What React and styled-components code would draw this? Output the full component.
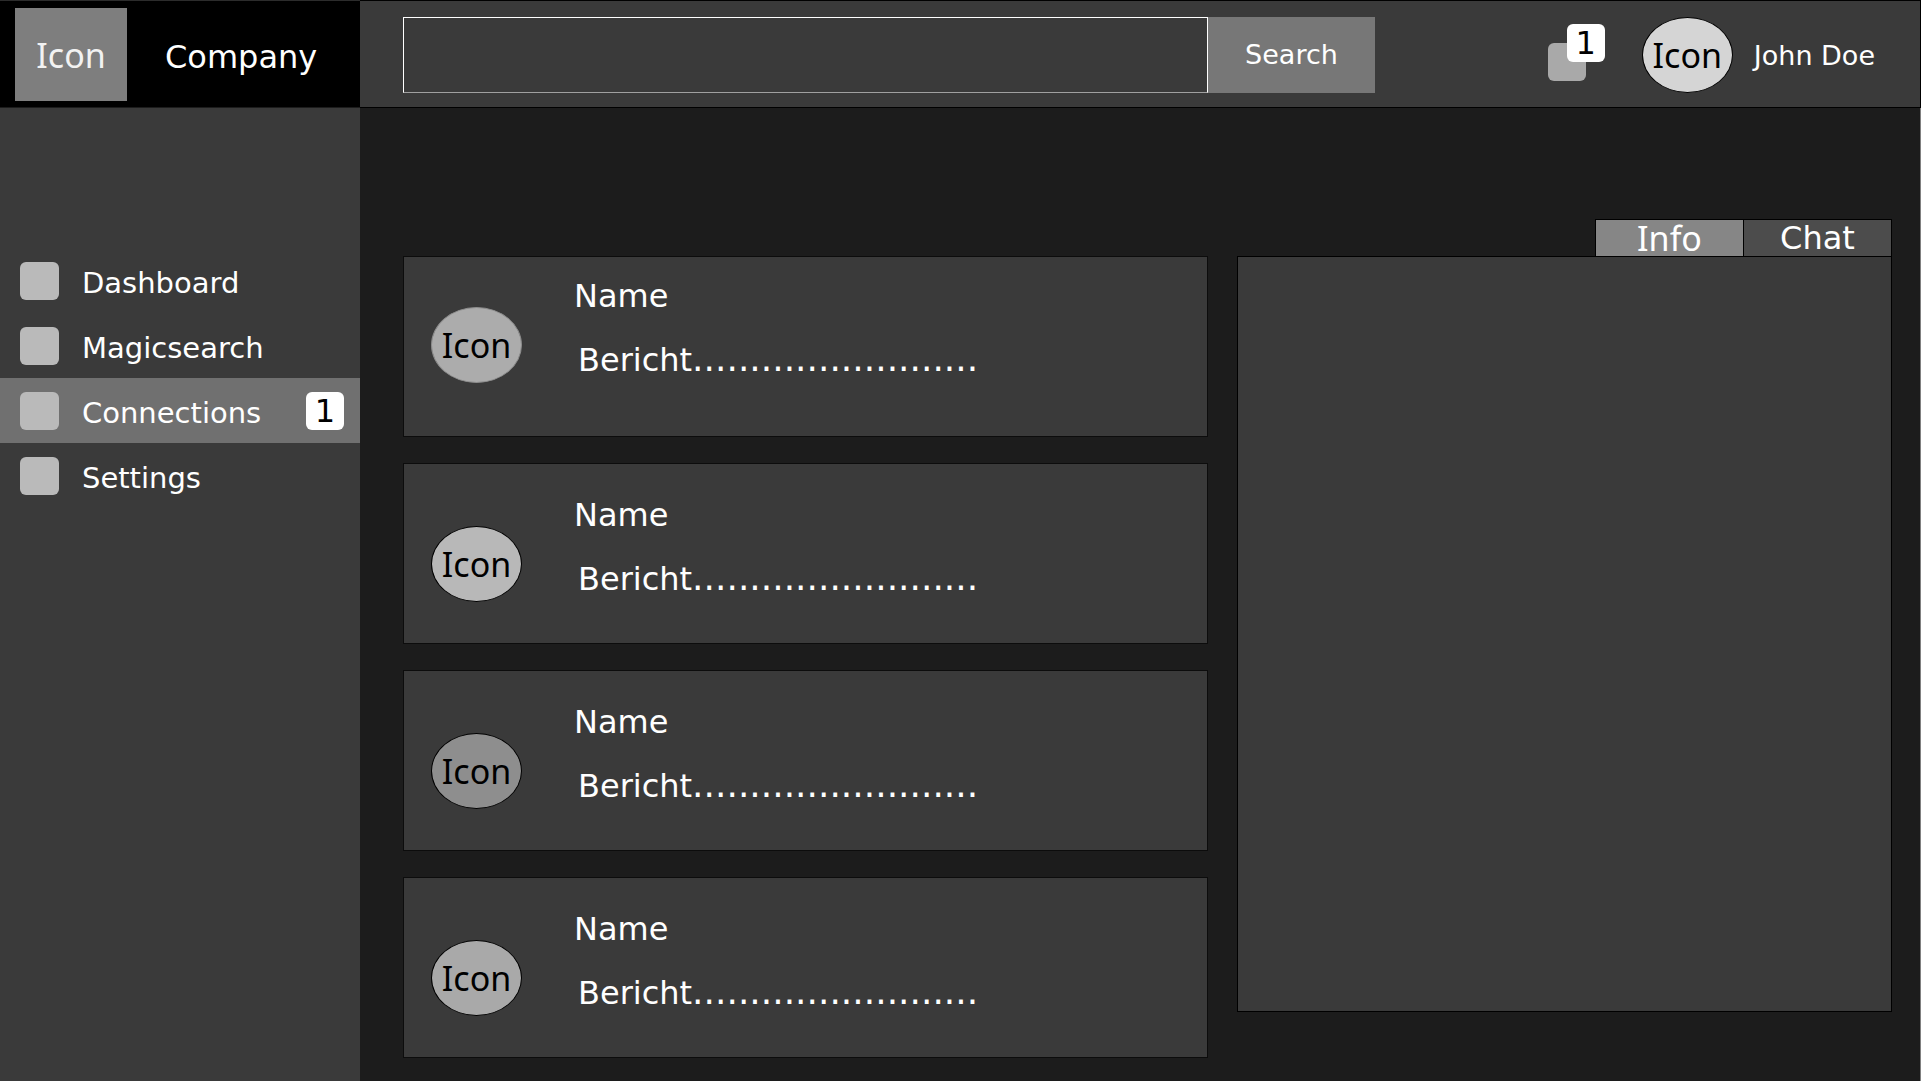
import React from "react";
import styled, { createGlobalStyle } from "styled-components";

const GlobalStyle = createGlobalStyle`
  *, *::before, *::after { box-sizing: border-box; }
  body {
    margin: 0;
    background: #1c1c1c;
    color: #fff;
    font-family: Verdana, "DejaVu Sans", sans-serif;
    font-size: 32px;
    line-height: 38px;
  }
  button, input { font: inherit; color: inherit; }
`;

const Page = styled.div`
  display: grid;
  grid-template-columns: 360px minmax(0, 1fr);
  grid-template-rows: 108px 1fr;
  min-height: 100vh;
`;

const Brand = styled.div`
  display: flex;
  align-items: center;
  gap: 38px;
  padding: 1px 15px 0;
  background: #000;
  border-top: 1px solid #2c2c2c;
  border-bottom: 1px solid #1c1c1c;
`;

const Logo = styled.span`
  display: grid;
  place-items: center;
  width: 112px;
  height: 93px;
  background: #7e7e7e;
  color: #f2f2f2;
  font-family: "Noto Sans", sans-serif;
  font-size: 34px;
`;

const CompanyName = styled.span`
  padding-top: 4px;
`;

const TopBar = styled.header`
  display: flex;
  align-items: center;
  justify-content: space-between;
  padding: 2px 45px 0 43px;
  background: #3a3a3a;
  border: 1px solid #000;
  border-left: 0;
`;

const SearchForm = styled.form`
  display: flex;
  flex: 0 1 972px;
  height: 76px;
`;

const SearchInput = styled.input`
  flex: 1;
  min-width: 0;
  padding: 0 20px;
  background: transparent;
  border: 1px solid #fff;
  border-bottom-color: #a0a0a0;
  border-radius: 0;
`;

const SearchButton = styled.button`
  width: 167px;
  padding: 0;
  border: 0;
  background: #777;
  font-size: 27px;
`;

const Account = styled.div`
  display: flex;
  align-items: center;
  font-size: 27px;
`;

const Notifications = styled.button`
  position: relative;
  width: 38px;
  height: 38px;
  margin: 14px 56px 0 0;
  padding: 0;
  border: 0;
  border-radius: 6px;
  background: #a9a9a9;
`;

const Badge = styled.span`
  display: grid;
  place-items: center;
  width: 38px;
  height: 38px;
  border-radius: 6px;
  background: #fff;
  color: #000;
  font-size: 32px;
`;

const CornerBadge = styled(Badge)`
  position: absolute;
  left: 19px;
  bottom: 19px;
`;

const Avatar = styled.span`
  display: grid;
  flex: none;
  place-items: center;
  width: 91px;
  height: 76px;
  border: 1px solid ${(p) => p.$edge || "#000"};
  border-radius: 50%;
  background: ${(p) => p.$tone};
  color: #000;
  font-family: "Noto Sans", sans-serif;
  font-size: 34px;
`;

const UserName = styled.span`
  padding: 2px 0 0 21px;
`;

const Sidebar = styled.nav`
  padding-top: 140px;
  background: #3a3a3a;
`;

const NavItem = styled.a`
  display: flex;
  align-items: center;
  height: 65px;
  padding: 0 16px 0 20px;
  background: ${(p) => (p.$active ? "#707070" : "transparent")};
  color: #fff;
  font-size: 29px;
  text-decoration: none;
`;

const NavIcon = styled.span`
  width: 39px;
  height: 38px;
  margin-right: 23px;
  border-radius: 6px;
  background: #bababa;
`;

const NavLabel = styled.span`
  padding-top: 4px;
`;

const NavBadge = styled(Badge)`
  margin-left: auto;
`;

const Content = styled.main`
  display: grid;
  grid-template-columns: minmax(0, 806fr) minmax(0, 655fr);
  align-items: start;
  gap: 29px;
  padding: 111px 28px 22px 43px;
  border-right: 1px solid #808080;
`;

const CardList = styled.div`
  display: grid;
  gap: 26px;
  padding-top: 37px;
`;

const Card = styled.article`
  display: flex;
  align-items: flex-start;
  gap: 52px;
  height: 181px;
  padding: ${(p) => (p.$raised ? "50px" : "62px")} 27px 0;
  border: 1px solid #0c0c0c;
  background: #3a3a3a;
`;

const CardText = styled.div`
  display: grid;
  gap: 25px;
  margin-top: -30px;
`;

const Name = styled.span``;

const Message = styled.span`
  padding-left: 4px;
`;

const Leader = styled.span`
  font-size: 36px;
`;

const Tabs = styled.div`
  display: flex;
  justify-content: flex-end;
`;

const Tab = styled.button`
  width: 149px;
  height: 37px;
  margin-left: -1px;
  padding: 0;
  border: 1px solid #000;
  border-bottom: 0;
  background: ${(p) => (p.$active ? "#868686" : "#4c4c4c")};
  font-family: ${(p) => (p.$active ? '"Noto Sans", sans-serif' : "inherit")};
  font-size: ${(p) => (p.$active ? "34px" : "32px")};
  line-height: 34px;
`;

const Panel = styled.section`
  height: 756px;
  border: 1px solid #000;
  background: #3a3a3a;
`;

const navItems = [
  { label: "Dashboard" },
  { label: "Magicsearch" },
  { label: "Connections", active: true, count: 1 },
  { label: "Settings" },
];

const messages = [
  { id: 1, tone: "#acacac", edge: "#8c8c8c", raised: true },
  { id: 2, tone: "#b8b8b8" },
  { id: 3, tone: "#8e8e8e" },
  { id: 4, tone: "#a9a9a9" },
];

export default function App() {
  return (
    <Page>
      <GlobalStyle />
      <Brand>
        <Logo>Icon</Logo>
        <CompanyName>Company</CompanyName>
      </Brand>
      <TopBar>
        <SearchForm onSubmit={(e) => e.preventDefault()}>
          <SearchInput type="search" aria-label="Search" />
          <SearchButton type="submit">Search</SearchButton>
        </SearchForm>
        <Account>
          <Notifications type="button">
            <CornerBadge>1</CornerBadge>
          </Notifications>
          <Avatar $tone="#d5d5d5">Icon</Avatar>
          <UserName>John Doe</UserName>
        </Account>
      </TopBar>
      <Sidebar>
        {navItems.map((item) => (
          <NavItem key={item.label} href="#" $active={item.active}>
            <NavIcon />
            <NavLabel>{item.label}</NavLabel>
            {item.count && <NavBadge>{item.count}</NavBadge>}
          </NavItem>
        ))}
      </Sidebar>
      <Content>
        <CardList>
          {messages.map((m) => (
            <Card key={m.id} $raised={m.raised}>
              <Avatar $tone={m.tone} $edge={m.edge}>Icon</Avatar>
              <CardText>
                <Name>Name</Name>
                <Message>
                  Bericht<Leader>.........................</Leader>
                </Message>
              </CardText>
            </Card>
          ))}
        </CardList>
        <div>
          <Tabs role="tablist">
            <Tab type="button" role="tab" aria-selected="true" $active>Info</Tab>
            <Tab type="button" role="tab" aria-selected="false">Chat</Tab>
          </Tabs>
          <Panel role="tabpanel" />
        </div>
      </Content>
    </Page>
  );
}
